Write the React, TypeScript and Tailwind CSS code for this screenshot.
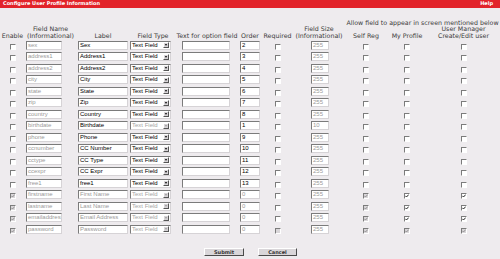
import type { ReactNode } from 'react'

type Row = {
    name: string
    label: string
    order: string
    size?: string
    system?: boolean
    typeLocked?: boolean
    last?: boolean
}

const rows: Row[] = [
    { name: 'sex', label: 'Sex', order: '2' },
    { name: 'address1', label: 'Address1', order: '3' },
    { name: 'address2', label: 'Address2', order: '4' },
    { name: 'city', label: 'City', order: '5' },
    { name: 'state', label: 'State', order: '6' },
    { name: 'zip', label: 'Zip', order: '7' },
    { name: 'country', label: 'Country', order: '8' },
    { name: 'birthdate', label: 'Birthdate', order: '1', size: '10', typeLocked: true },
    { name: 'phone', label: 'Phone', order: '9' },
    { name: 'ccnumber', label: 'CC Number', order: '10' },
    { name: 'cctype', label: 'CC Type', order: '11' },
    { name: 'ccexpr', label: 'CC Expr', order: '12' },
    { name: 'free1', label: 'free1', order: '13' },
    { name: 'firstname', label: 'First Name', order: '0', system: true },
    { name: 'lastname', label: 'Last Name', order: '0', system: true },
    { name: 'emailaddress', label: 'Email Address', order: '0', system: true },
    { name: 'password', label: 'Password', order: '0', system: true, last: true },
]

const grid =
    'grid grid-cols-[25px_51px_54px_46px_62px_24px_31px_52px_42px_40px_73px]'

const Box = ({
    w,
    ml = 0,
    children,
    muted,
}: {
    w: string
    ml?: number
    children?: ReactNode
    muted?: boolean
}) => (
    <div
        className={`${w} h-[9px] bg-white border border-t-[#7b7b7b] border-l-[#7b7b7b] border-r-[#d6d3d6] border-b-[#d6d3d6] pl-[1px] overflow-hidden whitespace-nowrap text-[6px] leading-[7px] font-['Liberation_Sans',Arial,sans-serif] ${
            muted ? 'text-[#9a9a9a]' : 'text-black'
        }`}
        style={{ marginLeft: ml }}
    >
        {children}
    </div>
)

const Check = ({
    checked,
    disabled,
}: {
    checked?: boolean
    disabled?: boolean
}) => (
    <div className="flex justify-center mt-[3px]">
        <div
            className={`w-[6px] h-[6px] border border-t-[#7b7b7b] border-l-[#7b7b7b] border-r-white border-b-white flex items-center justify-center ${
                disabled ? 'bg-[#d9d6d9]' : 'bg-white'
            }`}
        >
            {checked && (
                <svg width="4" height="4" viewBox="0 0 4 4">
                    <path
                        d="M0.3 1.8 L1.5 3 L3.7 0.6"
                        fill="none"
                        stroke={disabled ? '#8a8a8a' : '#111'}
                        strokeWidth="0.9"
                    />
                </svg>
            )}
        </div>
    </div>
)

const FieldType = ({ disabled }: { disabled?: boolean }) => (
    <div className="w-[41px] h-[9px] bg-white border border-t-[#7b7b7b] border-l-[#7b7b7b] border-r-[#d6d3d6] border-b-[#d6d3d6] flex items-center justify-between pl-[1px] pr-[1px]">
        <span
            className={`text-[6px] leading-[7px] font-['Liberation_Sans',Arial,sans-serif] ${
                disabled ? 'text-[#a5a5a5]' : 'text-black'
            }`}
        >
            Text Field
        </span>
        <div className="w-[6px] h-[6px] bg-[#d6d3d6] border-[0.5px] border-t-white border-l-white border-r-[#555] border-b-[#555] flex items-center justify-center">
            <div
                className={`w-0 h-0 border-l-[1.5px] border-r-[1.5px] border-t-[2px] border-l-transparent border-r-transparent ${
                    disabled ? 'border-t-[#999]' : 'border-t-black'
                }`}
            />
        </div>
    </div>
)

const Head = ({ children }: { children: ReactNode }) => (
    <div className="text-center">{children}</div>
)

export default function App() {
    return (
        <div className="w-[500px] h-[259px] bg-[#eeebee] font-['DejaVu_Sans',Verdana,sans-serif] text-[#3a3a3a] overflow-hidden">
            <div className="h-[7.5px] bg-[#e2232a] flex items-center justify-between pl-[3px] pr-[7px] text-white font-bold text-[5px] leading-[7px]">
                <span>Configure User Profile Information</span>
                <span>Help</span>
            </div>

            <div
                className={`${grid} pt-[12px] text-[6.3px] leading-[6.5px] items-end`}
            >
                <div className="col-start-9 col-span-3 text-center whitespace-nowrap">
                    Allow field to appear in screen mentioned below
                </div>
                <div className="col-start-1 row-start-2">
                    <Head>Enable</Head>
                </div>
                <Head>
                    Field Name
                    <br />
                    (Informational)
                </Head>
                <Head>Label</Head>
                <Head>Field Type</Head>
                <div className="text-center whitespace-nowrap">
                    Text for option field
                </div>
                <Head>Order</Head>
                <Head>Required</Head>
                <Head>
                    Field Size
                    <br />
                    (Informational)
                </Head>
                <Head>Self Reg</Head>
                <Head>My Profile</Head>
                <Head>
                    User Manager
                    <br />
                    Create/Edit user
                </Head>
            </div>

            <div className="pt-[0.5px]">
                {rows.map((r) => (
                    <div
                        key={r.name}
                        className={`${grid} h-[11.5px] items-center`}
                    >
                        <Check checked={r.system} disabled={r.system} />
                        <Box w="w-[36px]" ml={1} muted>
                            {r.name}
                        </Box>
                        <Box w="w-[50px]" ml={2} muted={r.system}>
                            {r.label}
                        </Box>
                        <FieldType disabled={r.system || r.typeLocked} />
                        <Box w="w-[48px]" ml={6} />
                        <Box w="w-[20px]" ml={2} muted={r.system}>
                            {r.order}
                        </Box>
                        <Check disabled={r.last} />
                        <Box w="w-[18px]" ml={18} muted>
                            {r.size ?? '255'}
                        </Box>
                        <Check checked={r.system} disabled={r.system} />
                        <Check checked={r.system} disabled={r.last} />
                        <Check checked={r.system} disabled={r.last} />
                    </div>
                ))}
            </div>

            <div className="flex justify-center gap-[14px] mt-[13px] pl-[1px]">
                <button className="w-[40px] h-[8px] bg-[#d9d6d9] border border-t-white border-l-white border-r-[#4a4a4a] border-b-[#4a4a4a] text-[5px] leading-[6px] font-bold text-[#333]">
                    Submit
                </button>
                <button className="w-[39px] h-[8px] bg-[#d9d6d9] border border-t-white border-l-white border-r-[#4a4a4a] border-b-[#4a4a4a] text-[5px] leading-[6px] font-bold text-[#333]">
                    Cancel
                </button>
            </div>
        </div>
    )
}
